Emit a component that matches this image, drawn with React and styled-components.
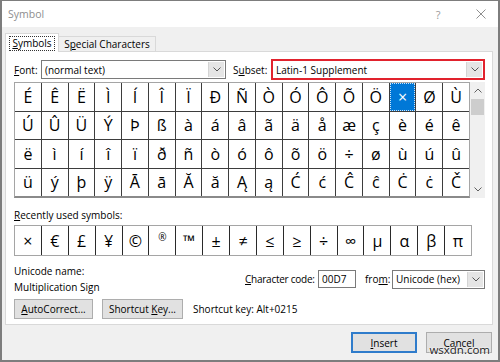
import React from "react";
import styled, { createGlobalStyle, css } from "styled-components";

const GlobalStyle = createGlobalStyle`
  html, body { margin: 0; padding: 0; background: #fff; }
  * { box-sizing: border-box; }
`;

const Win = styled.div`
  position: relative;
  width: 500px;
  height: 362px;
  border: solid #7d7d7d;
  border-width: 1px 2px 2px 2px;
  display: flex;
  flex-direction: column;
  background: #f0f0f0;
  font-family: "Open Sans", "Noto Sans", sans-serif;
  font-size: 10px;
  color: #000;
  overflow: hidden;
`;

const TitleBar = styled.div`
  height: 26px;
  flex: none;
  background: #fff;
  display: flex;
  align-items: center;
  padding-left: 6px;
`;

const Title = styled.div`
  font-size: 10.5px;
  color: #8e8e8e;
`;

const TitleButtons = styled.div`
  margin-left: auto;
  display: flex;
  height: 100%;
`;

const TitleBtn = styled.div`
  width: ${(p) => p.$w}px;
  margin-right: ${(p) => p.$mr || 0}px;
  display: flex;
  align-items: center;
  justify-content: center;
  color: #9a9a9a;
  font-size: 11px;
`;

const Body = styled.div`
  flex: 1;
  display: flex;
  flex-direction: column;
  padding: 7px 5px 0 3px;
`;

const TabStrip = styled.div`
  display: flex;
  align-items: flex-end;
  height: 18px;
  margin-bottom: -1px;
  position: relative;
  z-index: 1;
`;

const Tab = styled.div`
  display: flex;
  align-items: center;
  justify-content: center;
  border: 1px solid #d9d9d9;
  border-bottom: none;
  ${(p) =>
    p.$active
      ? css`
          width: 54px;
          height: 19px;
          background: #fff;
        `
      : css`
          width: 97px;
          height: 16px;
          background: #f0f0f0;
          border-left: none;
          border-bottom: 1px solid #d9d9d9;
        `}
`;

const FocusText = styled.span`
  border: 1px dotted #333;
  padding: 0 2px;
  line-height: 13px;
`;

const Key = styled.span`
  text-decoration: underline;
`;

const Panel = styled.div`
  height: 274px;
  flex: none;
  border: 1px solid #d9d9d9;
  background: #fff;
  padding: 8px 7px 0 8px;
  display: flex;
  flex-direction: column;
`;

const FontRow = styled.div`
  display: flex;
  align-items: center;
  height: 19px;
`;

const FieldLabel = styled.div`
  width: ${(p) => p.$w}px;
  margin-left: ${(p) => p.$ml || 0}px;
  letter-spacing: ${(p) => p.$ls || 0}px;
  white-space: nowrap;
  flex: none;
`;

const Combo = styled.div`
  width: ${(p) => p.$w}px;
  height: ${(p) => (p.$hl ? 21 : 19)}px;
  margin: ${(p) => (p.$hl ? "-1px 0" : "0")};
  flex: none;
  display: flex;
  background: #fff;
  border: ${(p) => (p.$hl ? "2px solid #e1222d" : "1px solid #7a7a7a")};
`;

const ComboText = styled.div`
  flex: 1;
  padding-left: 3px;
  display: flex;
  align-items: center;
  white-space: nowrap;
`;

const DropBtn = styled.div`
  width: 16px;
  margin: 1px;
  background: #e5e5e5;
  border-left: 1px solid #d4d4d4;
  display: flex;
  align-items: center;
  justify-content: center;
`;

const GridArea = styled.div`
  margin-top: 3px;
  height: 116px;
  display: flex;
  flex: none;
`;

const SymbolGrid = styled.div`
  width: 456px;
  height: 100%;
  display: grid;
  grid-template-columns: repeat(17, 1fr);
  grid-template-rows: repeat(4, 1fr);
  gap: 1px;
  background: #3d3d3d;
  border: 1px solid #a5a5a5;
  border-bottom: 2px solid #8a8a8a;
`;

const Cell = styled.div`
  background: ${(p) => (p.$sel ? "#0078d7" : "#fff")};
  color: ${(p) => (p.$sel ? "#fff" : "#000")};
  display: flex;
  align-items: center;
  justify-content: center;
  font-size: ${(p) => (p.$small ? 10 : 16)}px;
  padding-bottom: ${(p) => (p.$small ? 8 : 0)}px;
  ${(p) =>
    p.$sel &&
    css`
      outline: 1px dotted #cfe4f7;
      outline-offset: -1px;
    `}
`;

const ScrollBar = styled.div`
  width: 15px;
  height: 100%;
  background: #f0f0f0;
  display: flex;
  flex-direction: column;
  align-items: center;
`;

const ScrollArrow = styled.div`
  height: 17px;
  width: 100%;
  display: flex;
  align-items: center;
  justify-content: center;
`;

const Thumb = styled.div`
  width: 13px;
  height: 16px;
  background: #cdcdcd;
`;

const Spacer = styled.div`
  flex: 1;
`;

const SectionLabel = styled.div`
  margin-top: 11px;
  line-height: 13px;
`;

const RecentGrid = styled.div`
  margin-top: 3px;
  width: 458px;
  height: 31px;
  flex: none;
  display: grid;
  grid-template-columns: repeat(17, 1fr);
  gap: 1px;
  background: #2a2a2a;
  border: 1px solid #a5a5a5;
`;

const InfoRow = styled.div`
  margin-top: 7px;
  display: flex;
  align-items: center;
  height: 32px;
`;

const InfoCol = styled.div`
  width: 231px;
  line-height: 16px;
  flex: none;
`;

const CodeGroup = styled.div`
  display: flex;
  align-items: center;
`;

const CodeInput = styled.div`
  width: 38px;
  height: 18px;
  border: 1px solid #7a7a7a;
  background: #fff;
  padding-left: 3px;
  display: flex;
  align-items: center;
`;

const ButtonRow = styled.div`
  margin-top: 4px;
  display: flex;
  align-items: center;
  gap: 9px;
`;

const Button = styled.div`
  width: ${(p) => p.$w}px;
  height: ${(p) => p.$h || 20}px;
  flex: none;
  display: flex;
  align-items: center;
  justify-content: center;
  background: #e1e1e1;
  border: ${(p) => (p.$primary ? "2px solid #2f7ccb" : "1px solid #adadad")};
  white-space: nowrap;
`;

const ShortcutText = styled.div`
  margin-left: 1px;
`;

const Footer = styled.div`
  display: flex;
  justify-content: flex-end;
  gap: 9px;
  padding-top: 7px;
  padding-right: 1px;
`;

const Watermark = styled.div`
  position: absolute;
  right: 8px;
  bottom: 3px;
  font-family: "Open Sans", sans-serif;
  font-size: 11.5px;
  color: #222;
  text-shadow: 0 0 2px #fff, 0 0 2px #fff;
`;

const Chevron = ({ up, down }) => (
  <svg width="8" height="5" viewBox="0 0 8 5">
    <path
      d={up ? "M0.5 4.5 L4 1 L7.5 4.5" : "M0.5 0.5 L4 4 L7.5 0.5"}
      fill="none"
      stroke={up || down ? "#606060" : "#555"}
      strokeWidth="1"
    />
  </svg>
);

const rows = [
  "É Ê Ë Ì Í Î Ï Ð Ñ Ò Ó Ô Õ Ö × Ø Ù",
  "Ú Û Ü Ý Þ ß à á â ã ä å æ ç è é ê",
  "ë ì í î ï ð ñ ò ó ô õ ö ÷ ø ù ú û",
  "ü ý þ ÿ Ā ā Ă ă Ą ą Ć ć Ĉ ĉ Ċ ċ Č",
];
const symbols = rows.join(" ").split(" ");
const recent = "× € £ ¥ © ® ™ ± ≠ ≤ ≥ ÷ ∞ μ α β π".split(" ");

export default function App() {
  return (
    <>
      <GlobalStyle />
      <Win>
        <TitleBar>
          <Title>Symbol</Title>
          <TitleButtons>
            <TitleBtn $w={34} $mr={9}>?</TitleBtn>
            <TitleBtn $w={34}>
              <svg width="10" height="10" viewBox="0 0 10 10">
                <path d="M0.5 0.5 L9.5 9.5 M9.5 0.5 L0.5 9.5" stroke="#8f8f8f" strokeWidth="1" />
              </svg>
            </TitleBtn>
          </TitleButtons>
        </TitleBar>
        <Body>
          <TabStrip>
            <Tab $active>
              <FocusText>
                <Key>S</Key>ymbols
              </FocusText>
            </Tab>
            <Tab>
              <span>
                S<Key>p</Key>ecial Characters
              </span>
            </Tab>
          </TabStrip>
          <Panel>
            <FontRow>
              <FieldLabel $w={27}>
                <Key>F</Key>ont:
              </FieldLabel>
              <Combo $w={185}>
                <ComboText>(normal text)</ComboText>
                <DropBtn>
                  <Chevron />
                </DropBtn>
              </Combo>
              <FieldLabel $w={38} $ml={7}>
                S<Key>u</Key>bset:
              </FieldLabel>
              <Combo $w={214} $hl>
                <ComboText>Latin-1 Supplement</ComboText>
                <DropBtn>
                  <Chevron />
                </DropBtn>
              </Combo>
            </FontRow>
            <GridArea>
              <SymbolGrid>
                {symbols.map((s, i) => (
                  <Cell key={i} $sel={i === 14}>
                    {s}
                  </Cell>
                ))}
              </SymbolGrid>
              <ScrollBar>
                <ScrollArrow>
                  <Chevron up />
                </ScrollArrow>
                <Thumb />
                <Spacer />
                <ScrollArrow>
                  <Chevron down />
                </ScrollArrow>
              </ScrollBar>
            </GridArea>
            <SectionLabel>
              <Key>R</Key>ecently used symbols:
            </SectionLabel>
            <RecentGrid>
              {recent.map((s, i) => (
                <Cell key={i} $small={s === "®"}>
                  {s}
                </Cell>
              ))}
            </RecentGrid>
            <InfoRow>
              <InfoCol>
                <div>Unicode name:</div>
                <div>Multiplication Sign</div>
              </InfoCol>
              <CodeGroup>
                <FieldLabel $w={73} $ls={-0.25}>
                  <Key>C</Key>haracter code:
                </FieldLabel>
                <CodeInput>00D7</CodeInput>
                <FieldLabel $w={27} $ml={9}>
                  fro<Key>m</Key>:
                </FieldLabel>
                <Combo $w={93}>
                  <ComboText>Unicode (hex)</ComboText>
                  <DropBtn>
                    <Chevron />
                  </DropBtn>
                </Combo>
              </CodeGroup>
            </InfoRow>
            <ButtonRow>
              <Button $w={79}>
                <span>
                  <Key>A</Key>utoCorrect...
                </span>
              </Button>
              <Button $w={81}>
                <span>
                  Shortcut <Key>K</Key>ey...
                </span>
              </Button>
              <ShortcutText>Shortcut key: Alt+0215</ShortcutText>
            </ButtonRow>
          </Panel>
          <Footer>
            <Button $w={66} $h={21} $primary>
              <span>
                <Key>I</Key>nsert
              </span>
            </Button>
            <Button $w={66} $h={21}>
              Cancel
            </Button>
          </Footer>
        </Body>
        <Watermark>wsxdn.com</Watermark>
      </Win>
    </>
  );
}
